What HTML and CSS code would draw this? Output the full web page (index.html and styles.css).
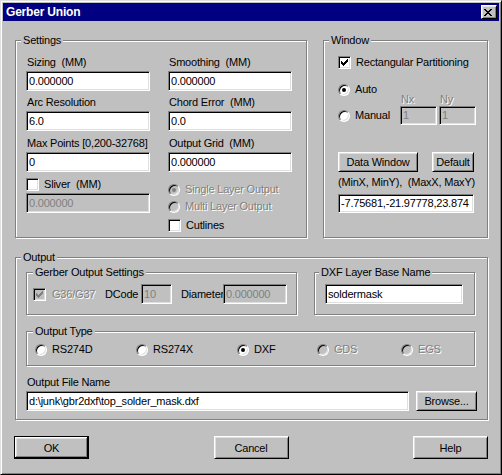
FILE: index.html
```html
<!DOCTYPE html>
<html>
<head>
<meta charset="utf-8">
<title>Gerber Union</title>
<link rel="stylesheet" href="styles.css">
</head>
<body>
<div class="window">
  <div class="titlebar">
    <span class="title">Gerber Union</span>
    <span class="close-btn"><svg width="8" height="7" viewBox="0 0 8 7" shape-rendering="crispEdges"><path fill="#000" d="M0 0h2v1h-2z M6 0h2v1h-2z M1 1h2v1h-2z M5 1h2v1h-2z M2 2h4v1h-4z M3 3h2v1h-2z M2 4h4v1h-4z M1 5h2v1h-2z M5 5h2v1h-2z M0 6h2v1h-2z M6 6h2v1h-2z"/></svg></span>
  </div>
  <div class="client">
    <div class="top-row">
      <div class="group settings">
        <span class="group-label">Settings</span>
        <div class="cols">
          <div class="col">
            <div class="field"><div class="lbl">Sizing  (MM)</div><div class="edit">0.000000</div></div>
            <div class="field mt5"><div class="lbl">Arc Resolution</div><div class="edit">6.0</div></div>
            <div class="field mt6"><div class="lbl">Max Points [0,200-32768]</div><div class="edit">0</div></div>
            <div class="opt mt6"><span class="check"></span><span>Sliver  (MM)</span></div>
            <div class="edit disabled mt2">0.000000</div>
          </div>
          <div class="col">
            <div class="field"><div class="lbl">Smoothing  (MM)</div><div class="edit">0.000000</div></div>
            <div class="field mt5"><div class="lbl">Chord Error  (MM)</div><div class="edit">0.0</div></div>
            <div class="field mt6"><div class="lbl">Output Grid  (MM)</div><div class="edit">0.000000</div></div>
            <div class="opt mt11"><span class="radio on disabled"></span><span class="gray">Single Layer Output</span></div>
            <div class="opt mt4"><span class="radio disabled"></span><span class="gray">Multi Layer Output</span></div>
            <div class="opt mt6"><span class="check"></span><span>Cutlines</span></div>
          </div>
        </div>
      </div>
      <div class="group wingroup">
        <span class="group-label">Window</span>
        <div class="opt"><span class="check"><svg width="7" height="7" viewBox="0 0 7 7" shape-rendering="crispEdges"><path fill="#000" d="M6 0h1v1h-1z M5 1h2v1h-2z M0 2h1v1h-1z M4 2h3v1h-3z M0 3h2v1h-2z M3 3h3v1h-3z M0 4h5v1h-5z M1 5h3v1h-3z M2 6h1v1h-1z"/></svg></span><span>Rectangular Partitioning</span></div>
        <div class="wgrid">
          <div class="opt w-auto"><span class="radio on"></span><span>Auto</span></div>
          <div class="lbl gray nx">Nx</div>
          <div class="lbl gray ny">Ny</div>
          <div class="opt w-manual"><span class="radio"></span><span>Manual</span></div>
          <div class="edit disabled small nxe">1</div>
          <div class="edit disabled small nye">1</div>
        </div>
        <div class="btnrow">
          <div class="btn b-data">Data Window</div>
          <div class="btn b-default">Default</div>
        </div>
        <div class="lbl mt4 minmax">(MinX, MinY),  (MaxX, MaxY)</div>
        <div class="edit small mt5 coords">-7.75681,-21.97778,23.874</div>
      </div>
    </div>

    <div class="group output">
      <span class="group-label">Output</span>
      <div class="orow">
        <div class="group gerber">
          <span class="group-label lbl-g">Gerber Output Settings</span>
          <div class="grow">
            <div class="opt g-item"><span class="check disabled"><svg width="7" height="7" viewBox="0 0 7 7" shape-rendering="crispEdges"><path fill="#808080" d="M6 0h1v1h-1z M5 1h2v1h-2z M0 2h1v1h-1z M4 2h3v1h-3z M0 3h2v1h-2z M3 3h3v1h-3z M0 4h5v1h-5z M1 5h3v1h-3z M2 6h1v1h-1z"/></svg></span><span class="gray">G36/G37</span></div>
            <span class="g-dcode">DCode</span>
            <div class="edit disabled e-dcode">10</div>
            <span class="g-diam">Diameter</span>
            <div class="edit disabled e-diam">0.000000</div>
          </div>
        </div>
        <div class="group dxf">
          <span class="group-label lbl-d">DXF Layer Base Name</span>
          <div class="edit e-dxf">soldermask</div>
        </div>
      </div>
      <div class="group otype">
        <span class="group-label lbl-g">Output Type</span>
        <div class="trow">
          <div class="opt t1"><span class="radio"></span><span>RS274D</span></div>
          <div class="opt t2"><span class="radio"></span><span>RS274X</span></div>
          <div class="opt t3"><span class="radio on"></span><span>DXF</span></div>
          <div class="opt t4"><span class="radio disabled"></span><span class="gray">GDS</span></div>
          <div class="opt t5"><span class="radio disabled"></span><span class="gray">EGS</span></div>
        </div>
      </div>
      <div class="lbl mt10">Output File Name</div>
      <div class="frow">
        <div class="edit e-file">d:\junk\gbr2dxf\top_solder_mask.dxf</div>
        <div class="btn b-browse">Browse...</div>
      </div>
    </div>

    <div class="buttons">
      <div class="btn big default">OK</div>
      <div class="btn big">Cancel</div>
      <div class="btn big">Help</div>
    </div>
  </div>
</div>
</body>
</html>
```

FILE: styles.css
```css
* { box-sizing: border-box; }
html, body { margin: 0; padding: 0; }
body {
  width: 502px;
  height: 475px;
  overflow: hidden;
  background: #c0c0c0;
  font-family: "Liberation Sans", Arial, sans-serif;
  font-size: 11px;
  letter-spacing: -0.2px;
  color: #000;
}
.window {
  width: 502px;
  height: 475px;
  border: 1px solid;
  border-color: #dfdfdf #000 #000 #dfdfdf;
  box-shadow: inset 1px 1px 0 #fff, inset -1px -1px 0 #808080;
  padding: 2px;
  background: #c0c0c0;
}
.titlebar {
  height: 18px;
  background: #000080;
  display: flex;
  align-items: center;
  justify-content: space-between;
  padding: 0 2px 0 3px;
}
.title {
  color: #fff;
  font-weight: bold;
  font-size: 12px;
  line-height: 14px;
}
.close-btn {
  display: block;
  width: 16px;
  height: 14px;
  border: 1px solid;
  border-color: #fff #000 #000 #fff;
  box-shadow: inset 1px 1px 0 #dfdfdf, inset -1px -1px 0 #808080;
  background: #c0c0c0;
  padding: 3px 0 0 2px;
}
.close-btn svg, .check svg { display: block; }

.client { padding: 19px 11px 0 12px; }
.top-row { display: flex; gap: 16px; }

.group {
  position: relative;
  border: 1px solid #808080;
  box-shadow: 1px 1px 0 #fff, inset 1px 1px 0 #fff;
}
.group-label {
  position: absolute;
  top: -7px;
  left: 5px;
  padding: 0 2px;
  background: #c0c0c0;
  line-height: 13px;
  white-space: pre;
}
.group-label.lbl-g { left: 6px; }
.group-label.lbl-d { left: 4px; }

.lbl { height: 13px; line-height: 13px; padding-left: 1px; white-space: pre; }
.gray { color: #808080; text-shadow: 1px 1px 0 #fff; }

.edit {
  height: 20px;
  border: 1px solid;
  border-color: #808080 #fff #fff #808080;
  box-shadow: inset 1px 1px 0 #000, inset -1px -1px 0 #dfdfdf;
  background: #fff;
  padding: 0 2px;
  line-height: 18px;
  white-space: nowrap;
  overflow: hidden;
}
.edit.small { height: 19px; line-height: 17px; }
.edit.disabled { background: #c0c0c0; color: #808080; }

.field .lbl { margin-bottom: 2px; }
.mt2 { margin-top: 2px; }
.mt4 { margin-top: 4px; }
.mt5 { margin-top: 5px; }
.mt6 { margin-top: 6px; }
.mt10 { margin-top: 10px; }
.mt11 { margin-top: 11px; }

.opt {
  display: flex;
  align-items: center;
  gap: 5px;
  height: 13px;
  line-height: 13px;
  white-space: pre;
}
.check {
  flex: none;
  width: 13px;
  height: 13px;
  border: 1px solid;
  border-color: #808080 #fff #fff #808080;
  box-shadow: inset 1px 1px 0 #000, inset -1px -1px 0 #dfdfdf;
  background: #fff;
  padding: 2px;
}
.check.disabled { background: #c0c0c0; }
.radio {
  flex: none;
  position: relative;
  width: 12px;
  height: 12px;
  border-radius: 50%;
  border: 1px solid;
  border-color: #808080 #fff #fff #808080;
  box-shadow: inset 1px 1px 0 #000, inset -1px -1px 0 #dfdfdf;
  background: #fff;
}
.radio.disabled { background: #c0c0c0; }
.radio.on::after {
  content: "";
  position: absolute;
  left: 3px;
  top: 3px;
  width: 4px;
  height: 4px;
  border-radius: 50%;
  background: #000;
}
.radio.on.disabled::after { background: #808080; }

.btn {
  display: flex;
  align-items: center;
  justify-content: center;
  border: 1px solid;
  border-color: #fff #000 #000 #fff;
  box-shadow: inset 1px 1px 0 #dfdfdf, inset -1px -1px 0 #808080;
  background: #c0c0c0;
  white-space: nowrap;
}
.btn.default {
  border-color: #000;
  box-shadow: inset -1px -1px 0 #000, inset 1px 1px 0 #fff, inset -2px -2px 0 #808080, inset 2px 2px 0 #dfdfdf;
}

/* Settings */
.settings { width: 292px; height: 198px; padding: 15px 0 0 10px; }
.cols { display: flex; gap: 18px; }
.col { width: 124px; display: flex; flex-direction: column; }

/* Window */
.wingroup { width: 165px; height: 198px; padding: 15px 0 0 14px; }
.wgrid {
  margin-top: 14px;
  display: grid;
  grid-template-columns: 60px 37px 37px;
  grid-template-rows: 10px 13px 19px;
  column-gap: 2px;
}
.w-auto { grid-column: 1; grid-row: 1 / 3; align-self: start; }
.nx { grid-column: 2; grid-row: 2; }
.ny { grid-column: 3; grid-row: 2; }
.w-manual { grid-column: 1; grid-row: 3; align-self: center; }
.nxe { grid-column: 2; grid-row: 3; }
.nye { grid-column: 3; grid-row: 3; }
.btnrow { display: flex; margin-top: 27px; }
.btnrow .btn { height: 20px; }
.b-data { width: 80px; }
.b-default { width: 42px; margin-left: 14px; }
.minmax { padding-left: 0; }
.coords { width: 136px; }

/* Output */
.output { width: 473px; height: 163px; margin-top: 19px; padding: 14px 0 0 10px; }
.orow { display: flex; }
.gerber { width: 271px; height: 43px; padding: 11px 0 0 6px; }
.grow { display: flex; align-items: center; height: 20px; }
.g-item { width: 72px; gap: 6px; }
.g-dcode { width: 36px; white-space: nowrap; }
.e-dcode { width: 31px; }
.g-diam { width: 42px; margin-left: 9px; white-space: nowrap; }
.e-diam { width: 64px; }
.dxf { width: 161px; height: 43px; margin-left: 17px; padding: 11px 0 0 10px; }
.e-dxf { width: 138px; }
.otype { width: 449px; height: 35px; margin-top: 16px; padding: 11px 0 0 8px; }
.trow { display: flex; }
.t1, .t2 { width: 101px; }
.t3 { width: 80px; }
.t4 { width: 84px; }
.frow { display: flex; margin-top: 2px; }
.e-file { width: 383px; }
.b-browse { width: 61px; height: 20px; margin-left: 7px; }

/* Bottom buttons */
.buttons {
  display: flex;
  justify-content: space-between;
  margin: 16px 0 0 -1px;
}
.btn.big { width: 75px; height: 23px; }
```
